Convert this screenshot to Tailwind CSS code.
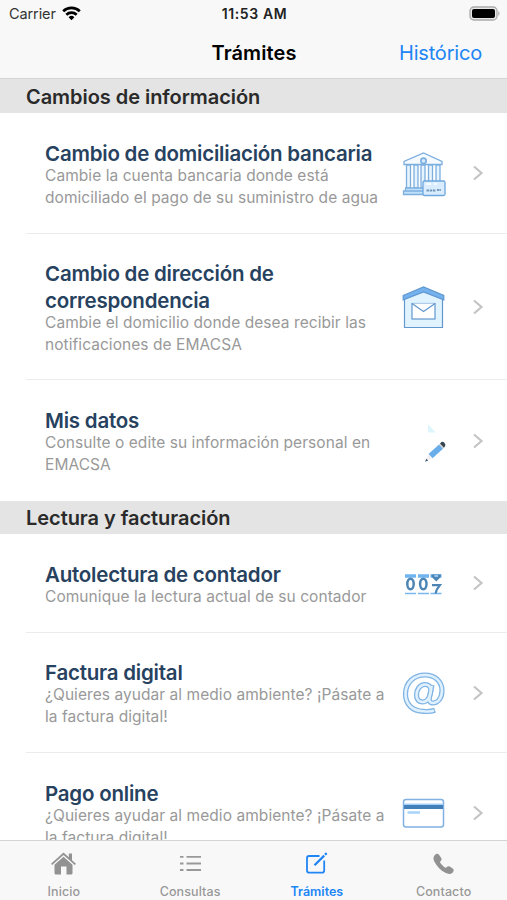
<!DOCTYPE html>
<html lang="es">
<head>
    <meta charset="UTF-8">
    <meta name="viewport" content="width=device-width, initial-scale=1.0">
    <title>Trámites</title>
    <script src="https://cdn.jsdelivr.net/npm/@tailwindcss/browser@4"></script>
</head>
<body class="bg-white font-['Inter',sans-serif]">
    <div class="flex h-[900px] w-[507px] flex-col overflow-hidden">

        <!-- Status bar + navigation bar -->
        <header class="h-[79px] shrink-0 border-b border-[#d4d4d4] bg-[#f8f8f8]">
            <div class="grid h-7 grid-cols-3 items-center pl-[9px] pr-[7px] text-black">
                <div class="flex items-center gap-[6px] text-[14.5px] leading-7 tracking-[-0.1px] text-[#333]">
                    Carrier
                    <svg class="-mt-[2px] h-[15px] w-[19px]" viewBox="0 0 19 15" fill="none" stroke="#000" stroke-width="2.7">
                        <path d="M1.2 5.2a12 12 0 0 1 16.6 0" />
                        <path d="M4.3 8.7a7.6 7.6 0 0 1 10.4 0" />
                        <path d="M9.5 14.2 6.6 11.2a4.2 4.2 0 0 1 5.8 0z" fill="#000" stroke="none" />
                    </svg>
                </div>
                <div class="-mt-px text-center text-[14px] font-semibold tracking-[0.6px] text-[#222]">11:53 AM</div>
                <svg class="-mt-[2px] h-[15px] w-[31px] justify-self-end" viewBox="0 0 31 15">
                    <rect x="1" y="1" width="27" height="13" rx="3.8" fill="#e8e8e8" stroke="#aaa" stroke-width="1.3" />
                    <rect x="3" y="3" width="23" height="9" rx="2" fill="#000" />
                    <path d="M29.3 5v5c1.600-.8 1.600-4.200 0-5z" fill="#aaa" />
                </svg>
            </div>
            <div class="grid h-[49px] grid-cols-3 items-center pr-[25px] pl-[25px] text-[20px]">
                <span></span>
                <h1 class="pl-px text-center font-semibold tracking-[0.1px] text-black">Trámites</h1>
                <a class="text-right tracking-[-0.2px] text-[#2085f5]">Histórico</a>
            </div>
        </header>

        <main class="min-h-0 flex-1 overflow-hidden">
            <h2 class="flex h-[34px] items-center bg-[#e4e4e4] pl-[26px] pt-[2px] text-[20px] font-semibold tracking-[-0.05px] text-[#2a2a2a]">Cambios de información</h2>
            <ul class="pl-[26px]">
                <li class="flex h-[121px] items-center border-b border-[#ececec] pl-[19px]">
                    <div class="w-[349px] pt-[2px] whitespace-nowrap">
                        <h3 class="text-[20.5px] leading-[27px] font-semibold tracking-[-0.22px] text-[#27425f]">Cambio de domiciliación bancaria</h3>
                        <p class="-mt-[2px] text-[15.5px] leading-[22px] tracking-[0.06px] text-[#999]">Cambie la cuenta bancaria donde está<br>domiciliado el pago de su suministro de agua</p>
                    </div>
                    <svg class="ml-[6px] mt-[2px] h-[48px] w-[48px]" viewBox="0 0 48 48" fill="#e6f4ff" stroke="#7caede" stroke-width="1.3">
                        <path d="M4 14.5v-3L23.5 3 42 11.5v3z" fill="#f4faff" />
                        <circle cx="23.5" cy="10.8" r="2.7" fill="#d3eaff" stroke-width="1.6" />
                        <path d="M6.5 15h4v23h-4zM14 15h4v23h-4zM21 15h4v23h-4zM28.500 15h4v23h-4zM36 15h4v23h-4z" />
                        <path d="M5.500 38h20v3h-20zM3.500 41h22v3.500h-22z" fill="#bfe0fb" />
                        <rect x="23" y="31" width="22" height="14.500" rx="1.500" fill="#d9edff" stroke="#6ea6dc" />
                        <path d="M26 34h5M34 34h3" stroke="#fff" />
                        <path d="M26.500 40.500h9M37 40h4" stroke="#7298bb" stroke-width="2" stroke-dasharray="2.500 .7" />
                    </svg>
                    <svg class="ml-[24px] h-4 w-3" viewBox="0 0 12 16" fill="none" stroke="#c4c4c7" stroke-width="2.2"><path d="m2 1.500 7.500 6.500-7.500 6.500" /></svg>
                </li>
                <li class="flex h-[146px] items-center border-b border-[#ececec] pl-[19px]">
                    <div class="w-[349px] pt-[2px] whitespace-nowrap">
                        <h3 class="text-[20.5px] leading-[27px] font-semibold tracking-[-0.22px] text-[#27425f]">Cambio de dirección de<br>correspondencia</h3>
                        <p class="-mt-[2px] text-[15.5px] leading-[22px] tracking-[0.06px] text-[#999]">Cambie el domicilio donde desea recibir las<br>notificaciones de EMACSA</p>
                    </div>
                    <svg class="ml-[6px] mt-px h-[48px] w-[48px]" viewBox="0 0 48 48" stroke="#6298ce" stroke-width="1.2">
                        <path d="M4.500 13 23.500 6l19 7v31.500h-38z" fill="#e0f3ff" />
                        <path d="M3.200 12.500 23.500 4l20.300 8.500v4.300L23.500 9 3.200 16.800z" fill="#73b2ee" />
                        <rect x="12" y="20.500" width="23" height="15.500" fill="#fff" />
                        <path d="m12 20.500 11.500 8 11.500-8" fill="#fff" />
                    </svg>
                    <svg class="ml-[24px] h-4 w-3" viewBox="0 0 12 16" fill="none" stroke="#c4c4c7" stroke-width="2.2"><path d="m2 1.500 7.500 6.500-7.500 6.500" /></svg>
                </li>
                <li class="flex h-[121px] items-center pl-[19px]">
                    <div class="w-[349px] pt-px whitespace-nowrap">
                        <h3 class="text-[20.5px] leading-[27px] font-semibold tracking-[-0.22px] text-[#27425f]">Mis datos</h3>
                        <p class="-mt-[2px] text-[15.5px] leading-[22px] tracking-[0.06px] text-[#999]">Consulte o edite su información personal en<br>EMACSA</p>
                    </div>
                    <svg class="ml-[6px] h-[48px] w-[48px]" viewBox="0 0 48 48">
                        <path d="M28 7.500v8h8z" fill="#ddf5fb" />
                        <path d="m28.500 37 10.500-9.500 4 4.300-10.500 9.500z" fill="#69aee9" />
                        <path d="m39 27.500 1-1 4 4.300-1 1z" fill="#c9cdd2" />
                        <path d="m40 26.500 1.500-1.400q1.500-.8 3 .8t.6 3L44 30.800z" fill="#37444f" />
                        <path d="m28.500 37-3 7 7-2.700z" fill="#f1eff2" />
                        <path d="m26.300 41.800-1.300 3 3.200-1.200z" fill="#3f546d" />
                    </svg>
                    <svg class="ml-[24px] h-4 w-3" viewBox="0 0 12 16" fill="none" stroke="#c4c4c7" stroke-width="2.2"><path d="m2 1.500 7.500 6.500-7.500 6.500" /></svg>
                </li>
            </ul>

            <h2 class="flex h-[33px] items-center bg-[#e4e4e4] pl-[26px] pt-px text-[20px] font-semibold tracking-[-0.05px] text-[#2a2a2a]">Lectura y facturación</h2>
            <ul class="pl-[26px]">
                <li class="flex h-[99px] items-center border-b border-[#ececec] pl-[19px]">
                    <div class="w-[349px] pt-[3px] whitespace-nowrap">
                        <h3 class="text-[20.5px] leading-[27px] font-semibold tracking-[-0.22px] text-[#27425f]">Autolectura de contador</h3>
                        <p class="-mt-[2px] text-[15.5px] leading-[22px] tracking-[0.06px] text-[#999]">Comunique la lectura actual de su contador</p>
                    </div>
                    <!-- Meter digits -->
                    <svg class="ml-[6px] mt-px h-[48px] w-[48px]" viewBox="0 0 48 48" fill="none">
                        <path d="M5 16h11M18 16h11M30.500 16h11" stroke="#70b4f0" stroke-width="3.500" />
                        <path d="M5 33.500h11M18 33.500h11M30.500 33.500h11" stroke="#78b7f0" stroke-width="1.700" />
                        <ellipse cx="10.500" cy="24" rx="3.200" ry="5.300" stroke="#4d86b5" stroke-width="2.500" />
                        <ellipse cx="23.300" cy="24" rx="3.200" ry="5.300" stroke="#4d86b5" stroke-width="2.500" />
                        <path d="M31.500 14.500h9.500q.3 3-2 4.300L36.200 21.500 33.500 18.800q-2.300-1.300-2-4.300z" fill="#4d86b5" />
                        <path d="M34.500 16h3.500" stroke="#a9d4fa" stroke-width="1.700" />
                        <path d="M32 25.200h7.800q-3.500 4-4.300 8.300" stroke="#4d86b5" stroke-width="2.200" />
                    </svg>
                    <svg class="ml-[24px] h-4 w-3" viewBox="0 0 12 16" fill="none" stroke="#c4c4c7" stroke-width="2.2"><path d="m2 1.500 7.500 6.500-7.500 6.500" /></svg>
                </li>
                <li class="flex h-[120px] items-center border-b border-[#ececec] pl-[19px]">
                    <div class="w-[349px] pt-[2px] whitespace-nowrap">
                        <h3 class="text-[20.5px] leading-[27px] font-semibold tracking-[-0.22px] text-[#27425f]">Factura digital</h3>
                        <p class="-mt-[2px] text-[15.5px] leading-[22px] tracking-[0.06px] text-[#999]">¿Quieres ayudar al medio ambiente? ¡Pásate a<br>la factura digital!</p>
                    </div>
                    <!-- At sign: dark outline stroke with a lighter one on top -->
                    <svg class="ml-[6px] h-[48px] w-[48px]" viewBox="0 0 48 48" fill="none" stroke-linejoin="round">
                        <g stroke="#80b4e4" stroke-width="5.200">
                            <path d="M35 41.300Q30 43 23.500 42.300C12 42 5.500 35 5.500 25 5.500 13.500 14 6 25 6c10 0 17 6.500 17 15.500 0 8-4.500 12.500-9 12.500-3.500 0-4.300-2.500-3.500-6l2.500-12" />
                            <path d="M31 21c-.5-4-3-5.500-6-5.500-5 0-8.500 5-8.500 10.500 0 4.500 2.500 7 6 7 4.500 0 7.500-4.500 8.500-12z" />
                        </g>
                        <g stroke="#dff1ff" stroke-width="2.600">
                            <path d="M34 41.600Q30 43 23.500 42.300C12 42 5.500 35 5.500 25 5.500 13.500 14 6 25 6c10 0 17 6.500 17 15.500 0 8-4.500 12.500-9 12.500-3.500 0-4.300-2.500-3.500-6l2.300-11" />
                            <path d="M31 21c-.5-4-3-5.500-6-5.500-5 0-8.500 5-8.500 10.500 0 4.500 2.500 7 6 7 4.500 0 7.500-4.500 8.500-12z" />
                        </g>
                    </svg>
                    <svg class="ml-[24px] h-4 w-3" viewBox="0 0 12 16" fill="none" stroke="#c4c4c7" stroke-width="2.2"><path d="m2 1.500 7.500 6.500-7.500 6.500" /></svg>
                </li>
                <li class="flex h-[120px] items-center pl-[19px]">
                    <div class="w-[349px] pt-[2px] whitespace-nowrap">
                        <h3 class="text-[20.5px] leading-[27px] font-semibold tracking-[-0.22px] text-[#27425f]">Pago online</h3>
                        <p class="-mt-[2px] text-[15.5px] leading-[22px] tracking-[0.06px] text-[#999]">¿Quieres ayudar al medio ambiente? ¡Pásate a<br>la factura digital!</p>
                    </div>
                    <svg class="ml-[6px] h-[48px] w-[48px]" viewBox="0 0 48 48" fill="none">
                        <rect x="3.500" y="10.500" width="40" height="27.500" rx="2.500" fill="#fff" stroke="#81b1e2" stroke-width="1.500" />
                        <path d="M4 15.300h39" stroke="#a5d2fb" stroke-width="1.500" />
                        <path d="M4 18h39" stroke="#437fb8" stroke-width="4" />
                        <path d="M7.500 23.500h12.500" stroke="#a9d4fa" stroke-width="2.500" />
                    </svg>
                    <svg class="ml-[24px] h-4 w-3" viewBox="0 0 12 16" fill="none" stroke="#c4c4c7" stroke-width="2.2"><path d="m2 1.500 7.500 6.500-7.500 6.500" /></svg>
                </li>
            </ul>
        </main>

        <!-- Tab bar -->
        <nav class="grid h-[60px] shrink-0 grid-cols-4 border-t border-[#d4d4d4] bg-[#f8f8f8] text-[12.5px] font-medium tracking-[0.1px] text-[#999]">
            <a class="flex flex-col items-center gap-[8px] pt-[10px] pl-px leading-4">
                <svg class="h-[25px] w-[25px] shrink-0" viewBox="0 0 25 25" fill="#929292">
                    <path d="M12.500 1.500 17.800 6.300V2.500h3.200v6.700l4 3.600-1.200 1.300L12.500 4 1.200 14.100 0 12.800z" />
                    <path d="M12.500 5.800 21.500 13.800V22q0 1.500-1.500 1.500h-4.500V15.500h-5.500v8H5q-1.500 0-1.500-1.500V13.800z" />
                </svg>
                Inicio
            </a>
            <a class="flex flex-col items-center gap-[8px] pt-[10px] leading-4">
                <svg class="h-[25px] w-[25px] shrink-0" viewBox="0 0 25 25" stroke="#999" stroke-width="1.800">
                    <path d="M2 5.800h3.500M8.500 5.800h14.500M2 12.500h3.500M8.500 12.500h14.500M2 19h3.500M8.500 19h14.500" />
                </svg>
                Consultas
            </a>
            <a class="flex flex-col items-center gap-[8px] pt-[10px] leading-4 font-semibold tracking-[0px] text-[#2085f5]">
                <svg class="h-[25px] w-[25px] shrink-0" viewBox="0 0 25 25" fill="none" stroke="#2085f5" stroke-width="1.800">
                    <path d="M15.500 5H5.200Q3 5 3 7.200V19.500q0 2.200 2.200 2.200H18q2.200 0 2.200-2.200V9.500" />
                    <path d="m10.500 14.300 9.700-9.700M21 3.800l1.700-1.700" stroke-width="2.200" />
                </svg>
                Trámites
            </a>
            <a class="flex flex-col items-center gap-[8px] pt-[10px] leading-4">
                <svg class="h-[25px] w-[25px] shrink-0" viewBox="0 0 25 25" fill="#929292">
                    <path d="M3.500 4.500C5 2.500 7 2.300 8.200 4l2 3c.7 1.100.5 2-.4 2.900-1 .9-.9 1.400-.2 2.400 1.100 1.500 2.300 2.700 3.900 3.900 1 .7 1.500.7 2.400-.3.8-.9 1.700-1 2.800-.3l3 2c1.500 1.100 1.400 2.700-.4 4.300-1.800 1.500-4.300 1.200-7-.1-4.600-2.300-8.800-6.600-11-11.200C2.200 8.200 2.200 6.200 3.500 4.500z" />
                </svg>
                Contacto
            </a>
        </nav>
    </div>
</body>
</html>
